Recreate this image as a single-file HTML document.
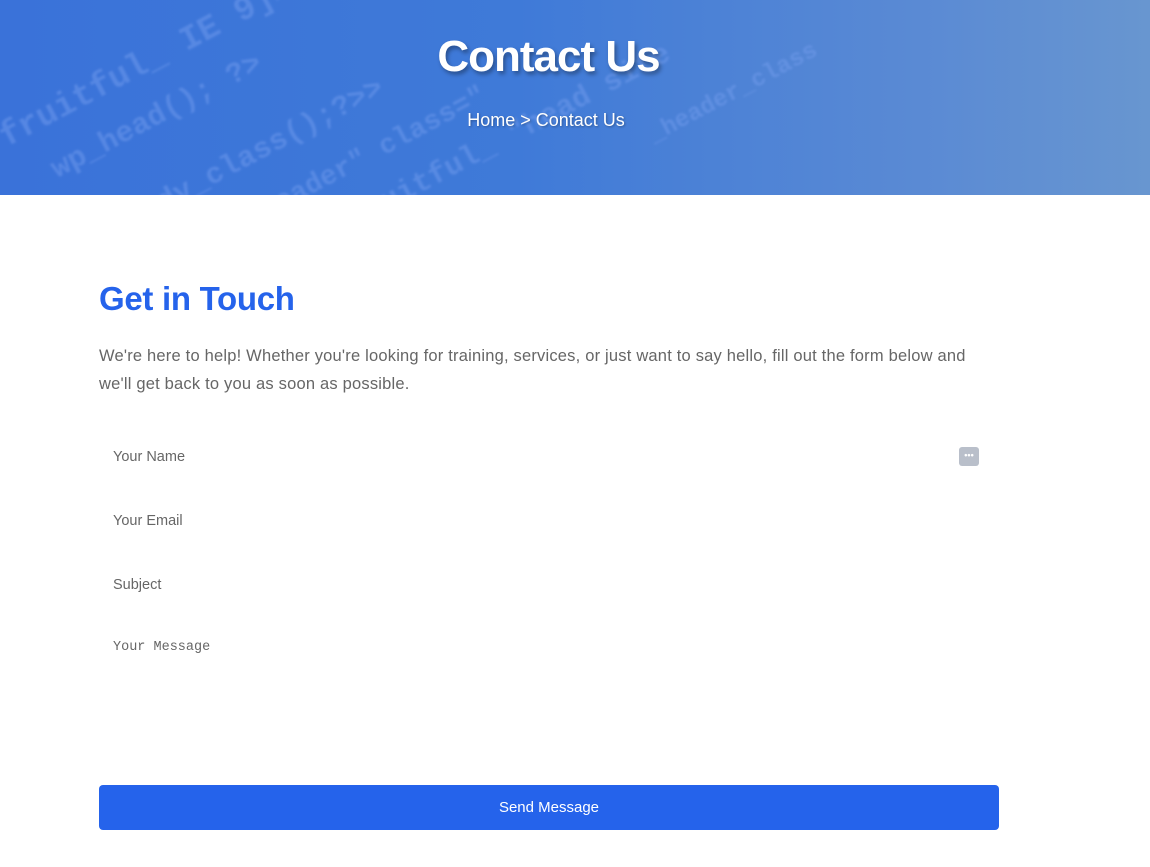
<!DOCTYPE html>
<html><head><meta charset="utf-8"><style>
*{margin:0;padding:0;box-sizing:border-box}
body{width:1150px;height:867px;background:#fff;font-family:"Liberation Sans",sans-serif;overflow:hidden;position:relative}
.hero{position:absolute;left:0;top:0;width:1150px;height:195px;background:linear-gradient(90deg,#3a72d9 0%,#3f7ad8 45%,#5a8ad4 80%,#6896d0 100%);overflow:hidden}
.code{position:absolute;font-family:"Liberation Mono",monospace;color:rgba(120,160,240,0.45);font-weight:bold;transform:rotate(-28deg);white-space:nowrap;filter:blur(1px)}
.hero h1{position:absolute;top:32px;left:0;width:1097px;text-align:center;color:#fff;font-size:44px;font-weight:bold;text-shadow:2px 3px 4px rgba(0,0,0,.35);letter-spacing:-1px}
.hero .bc{position:absolute;top:110px;left:0;width:1092px;text-align:center;color:#fff;font-size:18px;text-shadow:1px 1px 2px rgba(0,0,0,.3)}
h2{position:absolute;left:99px;top:280px;color:#2563eb;font-size:33px;font-weight:bold;letter-spacing:-0.3px}
p.intro{position:absolute;left:99px;top:342px;width:920px;color:#666;font-size:16.5px;line-height:28px;letter-spacing:0.2px;white-space:nowrap}
.ph{position:absolute;left:113px;color:#666;font-size:14.5px}
.mono{font-family:"Liberation Mono",monospace;font-size:13.5px}
.icon{position:absolute;left:959px;top:447px;width:20px;height:19px;background:#b9bfca;border-radius:3px;color:#fff;font-size:9px;text-align:center;line-height:17px;font-weight:bold}
.btn{position:absolute;left:99px;top:785px;width:900px;height:45px;background:#2563eb;border-radius:4px;color:#fff;font-size:15px;text-align:center;line-height:45px}
</style></head><body>
<div class="hero">
<div class="code" style="left:-20px;top:30px;font-size:34px">fruitful_  IE 9]&gt;&lt;sc</div>
<div class="code" style="left:40px;top:100px;font-size:30px">wp_head(); ?&gt;</div>
<div class="code" style="left:60px;top:150px;font-size:30px">hp body_class();?&gt;&gt;</div>
<div class="code" style="left:200px;top:150px;font-size:28px">ge-header" class="</div>
<div class="code" style="left:330px;top:120px;font-size:30px">fruitful_  "head site</div>
<div class="code" style="left:640px;top:80px;font-size:24px">_header_class</div>
<h1>Contact Us</h1>
<div class="bc">Home &gt; Contact Us</div>
</div>
<h2>Get in Touch</h2>
<p class="intro">We're here to help! Whether you're looking for training, services, or just want to say hello, fill out the form below and<br>we'll get back to you as soon as possible.</p>
<div class="ph" style="top:449px">Your Name</div>
<div class="icon">•••</div>
<div class="ph" style="top:513px">Your Email</div>
<div class="ph" style="top:577px">Subject</div>
<div class="ph mono" style="top:640px">Your Message</div>
<div class="btn">Send Message</div>
</body></html>
